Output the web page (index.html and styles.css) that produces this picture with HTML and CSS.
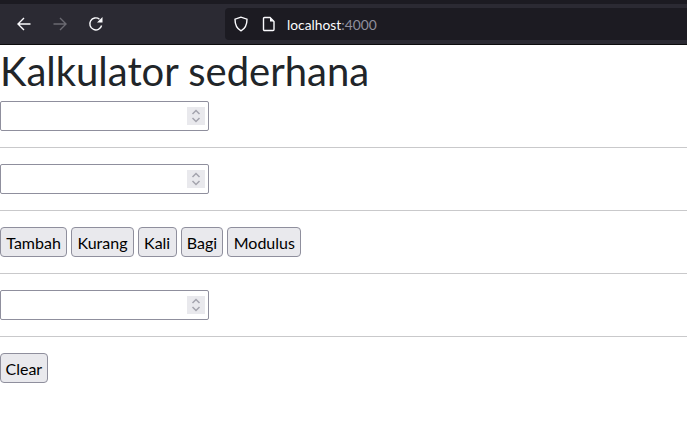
FILE: index.html
```html
<!DOCTYPE html>
<html lang="en">
<head>
    <meta charset="UTF-8">
    <title>Kalkulator sederhana</title>
    <link rel="stylesheet" href="styles.css">
</head>
<body>
    <div class="toolbar">
        <div class="nav-buttons">
            <svg class="icon" viewBox="0 0 16 16"><path d="M14.500 8H2M8 2L2 8l6 6"/></svg>
            <svg class="icon dim" viewBox="0 0 16 16"><path d="M1.500 8H14M8 2l6 6-6 6"/></svg>
            <svg class="icon" viewBox="0 0 16 16"><path d="M13.600 9.500A6 6 0 1 1 11.500 3.200"/><path class="fill" d="M14.500 1v5.500H9z"/></svg>
        </div>
        <div class="urlbar">
            <svg class="icon shield" viewBox="0 0 16 16"><path d="M8 1.200L2 3.200c0 5.500 1.500 9.300 6 11.600 4.500-2.300 6-6.100 6-11.600z"/></svg>
            <svg class="icon page" viewBox="0 0 16 16"><path d="M3.500 1.500h5.500l4 4v8a1 1 0 0 1-1 1h-8.500a1 1 0 0 1-1-1v-11a1 1 0 0 1 1-1z"/><path class="fill" d="M9 1.500l4 4h-4z"/></svg>
            <span class="host">localhost<span class="port">:4000</span></span>
        </div>
    </div>

    <h1>Kalkulator sederhana</h1>

    <div class="number-field">
        <input type="text" aria-label="Angka pertama">
        <span class="spin"><svg viewBox="0 0 18 18"><path d="M5.500 7L9 3.500 12.500 7M5.500 11L9 14.500 12.500 11"/></svg></span>
    </div>
    <hr>
    <div class="number-field">
        <input type="text" aria-label="Angka kedua">
        <span class="spin"><svg viewBox="0 0 18 18"><path d="M5.500 7L9 3.500 12.500 7M5.500 11L9 14.500 12.500 11"/></svg></span>
    </div>
    <hr>
    <div class="button-row">
        <button>Tambah</button>
        <button>Kurang</button>
        <button>Kali</button>
        <button>Bagi</button>
        <button>Modulus</button>
    </div>
    <hr>
    <div class="number-field">
        <input type="text" aria-label="Hasil">
        <span class="spin"><svg viewBox="0 0 18 18"><path d="M5.500 7L9 3.500 12.500 7M5.500 11L9 14.500 12.500 11"/></svg></span>
    </div>
    <hr>
    <div class="button-row">
        <button class="clear">Clear</button>
    </div>
</body>
</html>
```

FILE: styles.css
```css
body {
    font-family: Lato, "Open Sans", sans-serif;
    margin: 0;
    padding: 0;
    background: #ffffff;
    color: #212529;
}

.toolbar {
    display: flex;
    align-items: center;
    height: 40px;
    background: #2b2a33;
    border-top: 4px solid #1c1b22;
    border-bottom: 1px solid #0c0c0d;
}

.nav-buttons {
    display: flex;
    gap: 20px;
    width: 225px;
    padding-left: 16px;
    box-sizing: border-box;
}

.icon {
    width: 16px;
    height: 16px;
    fill: none;
    stroke: #fbfbfe;
    stroke-width: 1.4;
}

.icon.dim {
    stroke: #6b6a72;
}

.icon .fill {
    fill: #fbfbfe;
    stroke: none;
}

.urlbar {
    flex: 1;
    display: flex;
    align-items: center;
    height: 32px;
    padding-left: 8px;
    background: #1c1b22;
    border-radius: 4px 0 0 4px;
}

.page {
    margin-left: 12px;
}

.host {
    margin-left: 10px;
    font-size: 13.8px;
    color: #fbfbfe;
}

.port {
    color: #8f8f9d;
}

h1 {
    margin: 0 0 6px;
    padding-top: 2px;
    font-size: 40px;
    font-weight: 400;
    line-height: 48px;
}

hr {
    margin: 16px 0;
    border: none;
    border-top: 1px solid #c9c9cb;
}

.number-field {
    display: flex;
    align-items: center;
    width: 209px;
    height: 30px;
    box-sizing: border-box;
    padding-right: 3px;
    border: 1px solid #8f8f9d;
    border-radius: 2px;
    background: #ffffff;
}

.number-field input {
    flex: 1;
    min-width: 0;
    border: none;
    outline: none;
    background: none;
}

.spin {
    display: flex;
    width: 18px;
    height: 18px;
    background: #e9e9ed;
}

.spin svg {
    fill: none;
    stroke: #a4a4ae;
    stroke-width: 1.5;
}

.button-row {
    display: flex;
    gap: 4px;
}

button {
    height: 30px;
    padding: 0 5.3px;
    font-family: inherit;
    font-size: 16px;
    color: #000000;
    background: #e9e9ed;
    border: 1px solid #8f8f9d;
    border-radius: 4px;
}

button.clear {
    padding: 0 4.5px;
}
```
